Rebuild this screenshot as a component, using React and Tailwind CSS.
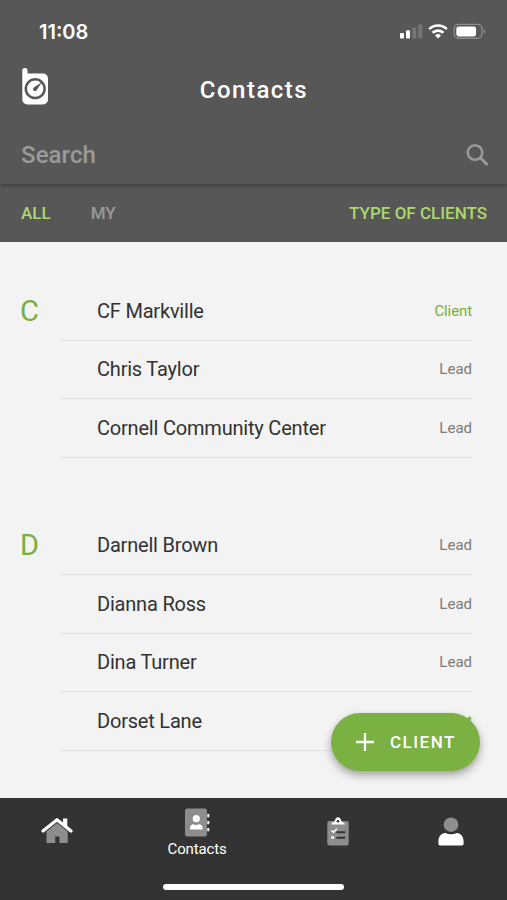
import React from 'react';

const groups = [
  {
    letter: 'C',
    contacts: [
      { name: 'CF Markville', type: 'Client' },
      { name: 'Chris Taylor', type: 'Lead' },
      { name: 'Cornell Community Center', type: 'Lead' },
    ],
  },
  {
    letter: 'D',
    contacts: [
      { name: 'Darnell Brown', type: 'Lead' },
      { name: 'Dianna Ross', type: 'Lead' },
      { name: 'Dina Turner', type: 'Lead' },
      { name: 'Dorset Lane', type: 'Client' },
    ],
  },
];

const StatusBar = () => (
  <div className="flex h-[62px] items-center justify-between pl-[39px] pr-[19px]">
    <span className="pt-0.5 font-['Inter',sans-serif] text-[20px] font-semibold leading-6">11:08</span>
    <svg width="88" height="20" viewBox="0 0 88 20" fill="#fff">
      <rect x="0" y="12" width="4" height="5.5" rx="1" />
      <rect x="6" y="9.3" width="4" height="8.2" rx="1" />
      <rect x="12.3" y="6.5" width="4" height="11" rx="1" fill="#757575" />
      <rect x="18.3" y="3.5" width="4" height="14" rx="1" fill="#757575" />
      <g fill="none" stroke="#fff" strokeWidth="2.7">
        <path d="M29.2 8.1a12.6 12.6 0 0 1 17.6 0" />
        <path d="M32.6 11.8a7.8 7.8 0 0 1 10.8 0" />
      </g>
      <path d="M35 14.4a4.4 4.4 0 0 1 6 0l-3 3.1z" />
      <rect x="54.2" y="3.4" width="27.6" height="13.8" rx="4.2" fill="none" stroke="#8b8b8b" strokeWidth="1.4" />
      <rect x="56.3" y="5.4" width="19.8" height="10" rx="2.3" />
      <path d="M83.5 7.9c2.4.9 2.4 3.9 0 4.8z" fill="#8b8b8b" />
    </svg>
  </div>
);

const RadioIcon = () => (
  <svg width="28" height="38" viewBox="0 0 28 38">
    <path
      d="M1.3 2.6a2.6 2.6 0 0 1 5.2 0V5.5H22a5 5 0 0 1 5 5V31.5a5 5 0 0 1-5 5H6.3a5 5 0 0 1-5-5z"
      fill="#fff"
    />
    <circle cx="14.2" cy="20.7" r="9.4" fill="none" stroke="#575757" strokeWidth="2.5" />
    <path d="M21 13.9L15.6 22.2a2 2 0 1 1-2.8-2.8z" fill="#575757" />
  </svg>
);

const HomeIcon = () => (
  <svg width="32" height="27" viewBox="0 0 32 27">
    <path d="M5.5 14.5L16 6l10.7 8.5V26H18.5v-6.5h-4.3V26H5.5z" fill="#8d8d8d" />
    <path d="M2 14L16 2.7 30 14" fill="none" stroke="#fff" strokeWidth="3.2" strokeLinecap="round" strokeLinejoin="round" />
    <path d="M22 1.5h4.3v9.5L22 7.5z" fill="#fff" />
  </svg>
);

const ContactsIcon = () => (
  <svg width="26" height="29" viewBox="0 0 26 29">
    <rect x="1" y="0.5" width="22" height="28" rx="2.5" fill="#8d8d8d" />
    <circle cx="12.3" cy="10.7" r="3.6" fill="#fff" />
    <path d="M6.1 21.4v-1.7c0-2.2 1.4-3.4 3.5-3.4 1.8.8 3.6.8 5.4 0 2.1 0 3.5 1.2 3.5 3.4v1.7z" fill="#fff" />
    <path d="M23.3 6h2v3.2h-2zM23.3 13h2v3.2h-2zM23.3 20h2v3.2h-2z" fill="#fff" />
  </svg>
);

const TasksIcon = () => (
  <svg width="22" height="29" viewBox="0 0 22 29">
    <rect x="0.3" y="4" width="21.4" height="24.5" rx="2" fill="#8d8d8d" />
    <path d="M4.3 7.5c0-1.500 1.400-2.300 3-2.800C8.200 2.300 9 .3 11 .3s2.800 2 3.700 4.400c1.600.5 3 1.300 3 2.800z" fill="#fff" />
    <circle cx="11" cy="4.2" r="1.3" fill="#333" />
    <path d="M4.5 13.4l2 1.8L10 11.800" fill="none" stroke="#fff" strokeWidth="1.5" />
    <circle cx="5.7" cy="20.5" r="1.5" fill="#fff" />
    <path d="M10.2 15.2h7.3M10.2 20.7h7.3" stroke="#333" strokeWidth="2" strokeLinecap="round" />
  </svg>
);

const ProfileIcon = () => (
  <svg width="26" height="29" viewBox="0 0 26 29">
    <circle cx="13" cy="7.7" r="7.3" fill="#8d8d8d" />
    <path
      d="M2.3 28.5C1 28.5.4 27.8.4 26.5v-2.2c0-4.500 2.800-8.300 6.800-8.300 3.800 1.600 7.800 1.600 11.600 0 4 0 6.800 3.800 6.800 8.300v2.200c0 1.300-.6 2-1.900 2z"
      fill="#fff"
    />
  </svg>
);

const Header = () => (
  <header className="relative h-[184px] bg-[#575757] text-white shadow-[0_1px_4px_rgba(0,0,0,0.35)]">
    <StatusBar />
    <div className="grid h-14 grid-cols-[1fr_auto_1fr] items-center pl-[21px] pr-5">
      <div className="pb-1.5">
        <RadioIcon />
      </div>
      <h1 className="text-2xl font-medium tracking-[1.5px]">Contacts</h1>
      <div />
    </div>
    <div className="flex h-[73px] items-center justify-between pl-[21px] pr-[18px] text-[#9a9a9a]">
      <span className="text-2xl font-medium tracking-[0.1px]">Search</span>
      <svg width="23" height="24" viewBox="0 0 23 24" fill="none" stroke="currentColor" strokeWidth="2.5">
        <circle cx="9" cy="9.5" r="7.3" />
        <path d="M14 14.5L21.6 22.1" strokeWidth="2.8" />
      </svg>
    </div>
  </header>
);

const Filters = () => (
  <div className="flex h-[58px] items-center bg-[#575757] pl-[21px] pr-5 pt-0.5 text-[17px] font-medium text-[#add86d]">
    <span>ALL</span>
    <span className="ml-10 text-[#9a9a9a]">MY</span>
    <span className="ml-auto">TYPE OF CLIENTS</span>
  </div>
);

const ContactRow = ({ name, type }) => (
  <li className="flex h-[58.6px] items-center justify-between border-b border-[#e0e0e0] pl-[37px]">
    <span className="text-[20px] tracking-[-0.2px] text-[#323232]">{name}</span>
    <span className={type === 'Client' ? 'text-[15px] tracking-[-0.1px] text-[#78af40]' : 'text-[15px] text-[#7b7b7b]'}>
      {type}
    </span>
  </li>
);

const ContactGroup = ({ letter, contacts }) => (
  <section className="flex">
    <h2 className="flex h-[58.6px] w-[60px] items-center pl-5 text-[29px] text-[#78af40]">{letter}</h2>
    <ul className="mr-[35px] flex-1">
      {contacts.map((contact) => (
        <ContactRow key={contact.name} {...contact} />
      ))}
    </ul>
  </section>
);

const BottomNav = () => (
  <nav className="flex h-[102px] flex-col items-center bg-[#333333] text-white">
    <div className="grid h-[86px] w-full grid-cols-[114px_166px_116px_110px] justify-items-center">
      <div className="pt-[19px]">
        <HomeIcon />
      </div>
      <div className="flex flex-col items-center pt-2.5">
        <ContactsIcon />
        <span className="mt-px text-[15px] leading-[22px] tracking-[-0.15px]">Contacts</span>
      </div>
      <div className="pt-[18.5px]">
        <TasksIcon />
      </div>
      <div className="pt-[18.5px]">
        <ProfileIcon />
      </div>
    </div>
    <div className="h-1.5 w-[181px] rounded-full bg-white" />
  </nav>
);

const App = () => {
  return (
    <div className="relative flex h-[900px] w-[507px] flex-col overflow-hidden bg-[#f3f3f3] font-['Roboto',sans-serif]">
      <Header />
      <Filters />
      <main className="flex flex-1 flex-col gap-[58.6px] pt-10">
        {groups.map((group) => (
          <ContactGroup key={group.letter} {...group} />
        ))}
      </main>
      <button className="absolute bottom-[129px] right-[27px] flex h-[58px] w-[149px] items-center rounded-full bg-[#7bb042] pl-[25px] text-white shadow-[0_4px_8px_rgba(0,0,0,0.35)]">
        <svg width="18" height="18" viewBox="0 0 18 18" stroke="currentColor" strokeWidth="2.3">
          <path d="M9 0v18M0 9h18" />
        </svg>
        <span className="ml-4 pt-0.5 text-[17px] font-medium tracking-[1.5px]">CLIENT</span>
      </button>
      <BottomNav />
    </div>
  );
};

export default App;
